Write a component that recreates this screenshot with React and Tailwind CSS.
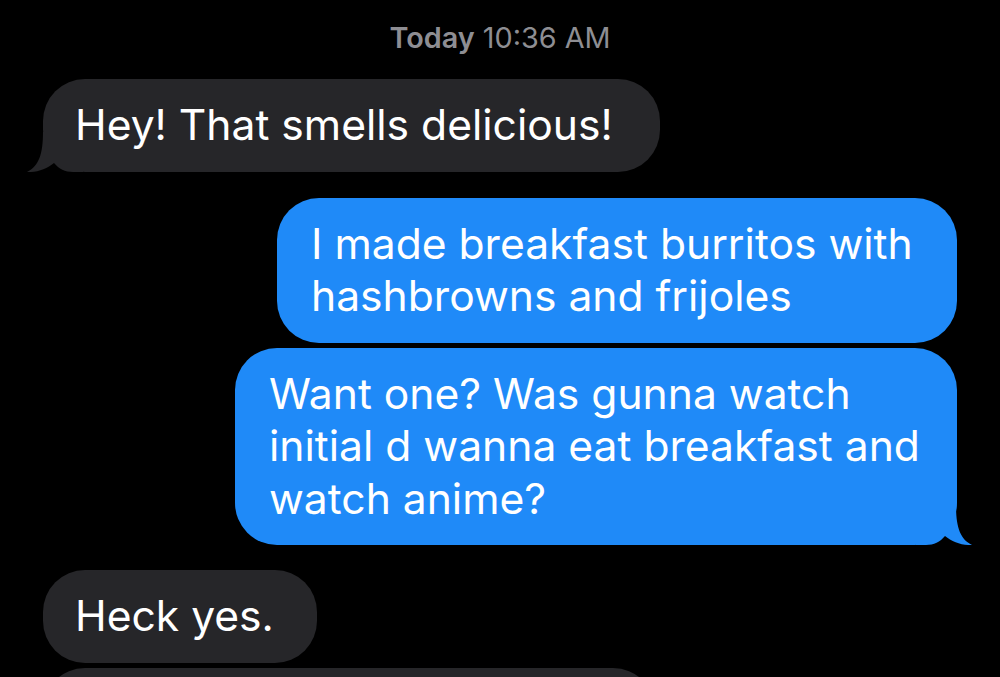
import React from "react";

function Tail({ color, side }) {
  const pos = side === "left" ? "left-[-16px]" : "right-[-15px] -scale-x-100";
  return (
    <svg
      className={`absolute bottom-0 ${pos}`}
      width="56"
      height="40"
      viewBox="0 0 56 40"
    >
      <path
        d="M16 0 C16 22 12 34 0 40 C10 40.5 20 37 27 31 C32 37 38 40 46 40 L56 40 L56 0 Z"
        fill={color}
      />
    </svg>
  );
}

function Bubble({ side, width, children, tail, extra = "" }) {
  const isMe = side === "right";
  const color = isMe ? "#1f8af8" : "#262629";
  return (
    <div
      className={`relative ${width} ${
        isMe ? "self-end bg-[#1f8af8]" : "self-start bg-[#262629]"
      } rounded-[42px] py-[20px] ${isMe ? "pl-[34px]" : "pl-[32px]"} text-white text-[42.6px] leading-[52.5px] whitespace-nowrap ${extra}`}
    >
      {tail && <Tail color={color} side={isMe ? "right" : "left"} />}
      <div className="relative">{children}</div>
    </div>
  );
}

export default function App() {
  return (
    <div
      className="w-[1000px] h-[677px] overflow-hidden bg-black flex flex-col px-[43px] pt-[21px]"
      style={{ fontFamily: "Inter, 'Noto Sans', sans-serif" }}
    >
      <div className="text-center text-[28.8px] leading-[34px] text-[#8e8e93]">
        <span className="font-semibold">Today</span> 10:36 AM
      </div>
      <div className="flex flex-col mt-[24px]">
        <Bubble side="left" width="w-[617px]" tail>
          Hey! That smells delicious!
        </Bubble>
        <Bubble side="right" width="w-[680px]" extra="mt-[26px]">
          I made breakfast burritos with
          <br />
          hashbrowns and frijoles
        </Bubble>
        <Bubble side="right" width="w-[722px]" tail extra="mt-[5px]">
          Want one? Was gunna watch
          <br />
          initial d wanna eat breakfast and
          <br />
          watch anime?
        </Bubble>
        <Bubble side="left" width="w-[274px]" extra="mt-[25px]">
          Heck yes.
        </Bubble>
        <Bubble side="left" width="w-[612px]" extra="mt-[5px]">
          &nbsp;
        </Bubble>
      </div>
    </div>
  );
}
